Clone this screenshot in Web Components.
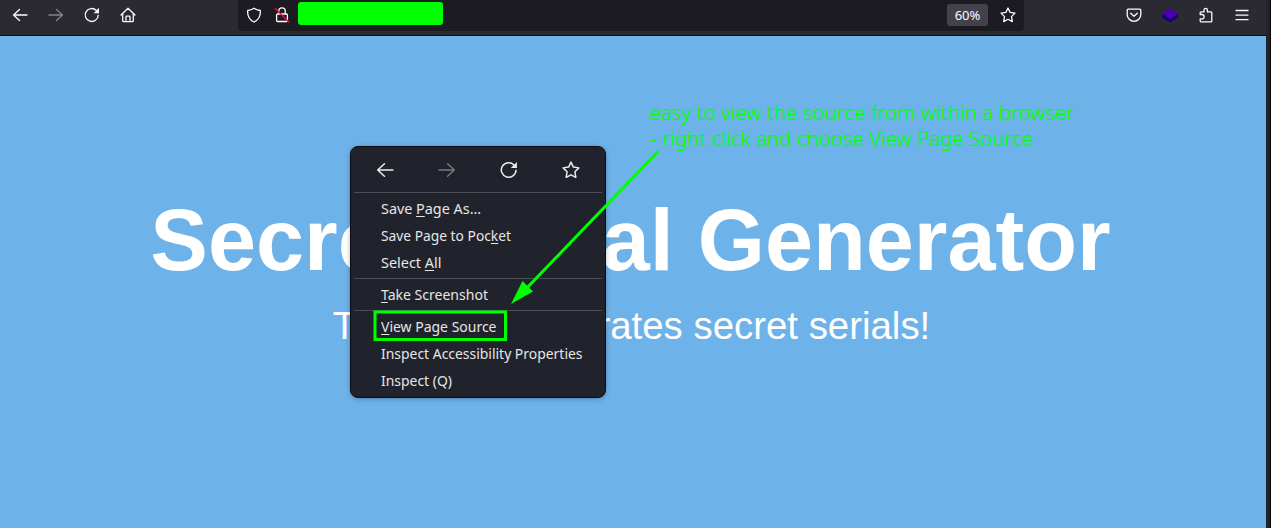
<!DOCTYPE html>
<html lang="en">
<head>
<meta charset="utf-8">
<title>Secret Serial Generator</title>
<style>
html,body{margin:0;height:100%;overflow:hidden;background:#20232c}
</style>
</head>
<body>
<browser-window></browser-window>
<script>
const icons = {
  back: '<path d="M15 8H1.5M7.500 2.500L1.500 8l6 5.500"/>',
  forward: '<path d="M1 8h13.500M8.500 2.500l6 5.500-6 5.500"/>',
  reload: '<path d="M14.2 8.2A6.5 6.5 0 1 1 12.4 3.5L14 5.1"/><path d="M15 .8v5.4H9.6z" fill="currentColor" stroke="none"/>',
  home: '<path d="M1 8l7-6.8L15 8M2.7 6.6v7.1q0 1 1 1h8.6q1 0 1-1V6.6M6 14.5V10q0-.8.8-.8h2.4q.8 0 .8.8v4.5"/>',
  shield: '<path d="M8 1.200Q11 3.100 14.300 3.500C14.800 9 12.500 13 8 15 3.500 13 1.200 9 1.700 3.500Q5 3.100 8 1.200z"/>',
  lock: '<path d="M4.7 7V4.2a3.3 3.3 0 0 1 6.6 0V7M3.6 7h8.8q1 0 1 1v5.5q0 1-1 1H3.6q-1 0-1-1V8q0-1 1-1z"/><path d="M1.2 1.5L14.8 15" stroke="#ff0039" stroke-width="1.4"/>',
  star: '<path d="M8 1l2.1 4.4 4.9.7-3.5 3.5.8 5L8 12.3l-4.3 2.3.8-5L1 6.1l4.9-.7z"/>',
  pocket: '<path d="M2.3 2.2h11.4q1.1 0 1.1 1.1v4.2a6.8 6.8 0 0 1-13.6 0V3.3q0-1.1 1.1-1.1z"/><path d="M4.7 6.2L8 9.2l3.3-3"/>',
  layers: '<path d="M0 10.5l8 5 8-5V7.5H0z" fill="#1d0070" stroke="none"/><path d="M0 6.7L8 1l8 5.7-8 5.4z" fill="#4b00ad" stroke="none"/>',
  puzzle: '<path d="M2.200 7.500V5.800q0-.9.9-.9H6V3a1.700 1.700 0 0 1 3.400 0v1.900h3.500q.9 0 .9.900v8.200q0 .9-.9.900H3.100q-.9 0-.9-.9v-2.200h1.700a2.100 2.100 0 0 0 0-4.300z"/>',
  menu: '<path d="M2 3.500h12M2 8.100h12M2 12.700h12"/>'
};
function define(name, html, setup) {
  customElements.define(name, class extends HTMLElement {
    constructor() {
      super();
      const t = document.createElement('template');
      t.innerHTML = html;
      this.attachShadow({mode: 'open'}).append(t.content.cloneNode(true));
    }
    connectedCallback() { if (setup) setup(this); }
  });
}

define('ui-icon', `<style>
:host{display:block;width:16px;height:16px;color:#fbfbfe;flex:none}
:host([dim]){opacity:.42}
svg{display:block;width:100%;height:100%;overflow:visible;fill:none;stroke:currentColor;stroke-width:1.3;stroke-linecap:round;stroke-linejoin:round}
</style><svg viewBox="0 0 16 16"></svg>`,
  el => { el.shadowRoot.querySelector('svg').innerHTML = icons[el.getAttribute('name')]; });

define('address-bar', `<style>
:host{display:flex;box-sizing:border-box;width:786px;height:31px;padding:0 8px;background:#1c1b22;border-radius:0 0 4px 4px;align-items:center}
ui-icon{margin-bottom:1px}
.redacted{width:145px;height:23px;margin:0 auto 4px 8px;background:#0f0;border-radius:3px}
.lock{margin-left:12px}
.zoom{width:41px;height:22px;margin:0 12px 1px 0;border-radius:3px;background:#42414d;color:#fbfbfe;font:13px/23px "Noto Sans",sans-serif;text-align:center}
</style>
<ui-icon name="shield"></ui-icon><ui-icon class="lock" name="lock"></ui-icon>
<div class="redacted"></div><div class="zoom">60%</div><ui-icon name="star"></ui-icon>`);

define('tool-bar', `<style>
:host{display:flex;box-sizing:border-box;height:36px;background:#2b2a33;border-bottom:1px solid #0c0c0d;padding:0 16px 4px 12px;align-items:center}
nav{display:flex;gap:20px;padding-bottom:1px}
address-bar{margin-left:102px}
.end{margin-left:auto}
</style>
<nav><ui-icon name="back"></ui-icon><ui-icon name="forward" dim></ui-icon><ui-icon name="reload"></ui-icon><ui-icon name="home"></ui-icon></nav>
<address-bar></address-bar>
<nav class="end"><ui-icon name="pocket"></ui-icon><ui-icon name="layers"></ui-icon><ui-icon name="puzzle"></ui-icon><ui-icon name="menu"></ui-icon></nav>`);

define('page-content', `<style>
:host{display:block;box-sizing:border-box;height:492px;padding:154px 5px 0 0;background:#6eb2ea;color:#fff;text-align:center;font-family:"Liberation Sans",sans-serif;white-space:nowrap}
h1{margin:0;font-size:86.4px;line-height:100px}
p{margin:12px -2px 0 0;font-size:38.4px;line-height:48px}
</style><h1>Secret Serial Generator</h1><p>This page generates secret serials!</p>`);

define('menu-item', `<style>
:host{display:block;height:27px;padding-left:27px;font:15px/27px "Noto Sans",sans-serif;color:#e6e6e4;white-space:nowrap}
span{display:inline-block;transform-origin:0 50%}
::slotted(u){text-underline-offset:2px}
</style><span><slot></slot></span>`,
  el => {
    const s = el.shadowRoot.querySelector('span');
    s.style.transform = 'scaleX(' + el.getAttribute('width') / s.getBoundingClientRect().width + ')';
  });

define('menu-rule', `<style>:host{display:block;height:1px;margin:2px 0;background:#4b4e55}</style>`);

define('context-menu', `<style>
:host{display:block;box-sizing:border-box;width:256px;height:252px;padding:4px 3px;border:1px solid #0b0c0f;border-radius:8px;background:#20232c;box-shadow:0 1px 5px #0004}
.actions{display:flex;box-sizing:border-box;height:39px;align-items:center;justify-content:space-between;padding:0 22px 1px}
.actions ui-icon{width:18px;height:18px;color:#eeeeec}
</style>
<div class="actions"><ui-icon name="back"></ui-icon><ui-icon name="forward" dim></ui-icon><ui-icon name="reload"></ui-icon><ui-icon name="star"></ui-icon></div>
<menu-rule></menu-rule>
<menu-item width="100">Save <u>P</u>age As…</menu-item>
<menu-item width="130">Save Page to Poc<u>k</u>et</menu-item>
<menu-item width="60.500">Select <u>A</u>ll</menu-item>
<menu-rule></menu-rule>
<menu-item width="107"><u>T</u>ake Screenshot</menu-item>
<menu-rule></menu-rule>
<menu-item width="115.500"><u>V</u>iew Page Source</menu-item>
<menu-item width="201.500">Inspect Accessibility Properties</menu-item>
<menu-item width="71">Inspect (Q)</menu-item>`);

define('page-notes', `<style>
:host{display:block}
svg{display:block}
text{font:300 20.5px "Noto Sans",sans-serif;fill:#0f0;stroke:#0f0;stroke-width:.25px}
</style>
<svg width="1271" height="528" viewBox="0 0 1271 528">
<text x="649.500" y="120" textLength="425">easy to view the source from within a browser</text>
<text x="650" y="145.500" textLength="383">- right click and choose View Page Source</text>
<path d="M658 151.500L524 291" stroke="#0f0" stroke-width="3" fill="none"/>
<path d="M511 304l11.500-23 10.500 10.500z" fill="#0f0"/>
<rect x="375" y="312" width="130.500" height="27.500" fill="none" stroke="#0f0" stroke-width="3"/>
</svg>`);

define('browser-window', `<style>
:host{display:block;position:relative;width:1271px;height:528px;overflow:hidden}
.frame{box-sizing:border-box;border-right:1px solid #08090b;padding-right:4px;background:#20232c}
context-menu{position:absolute;left:350px;top:146px}
page-notes{position:absolute;left:0;top:0}
</style>
<div class="frame"><tool-bar></tool-bar><page-content></page-content></div>
<context-menu></context-menu><page-notes></page-notes>`);
</script>
</body>
</html>
